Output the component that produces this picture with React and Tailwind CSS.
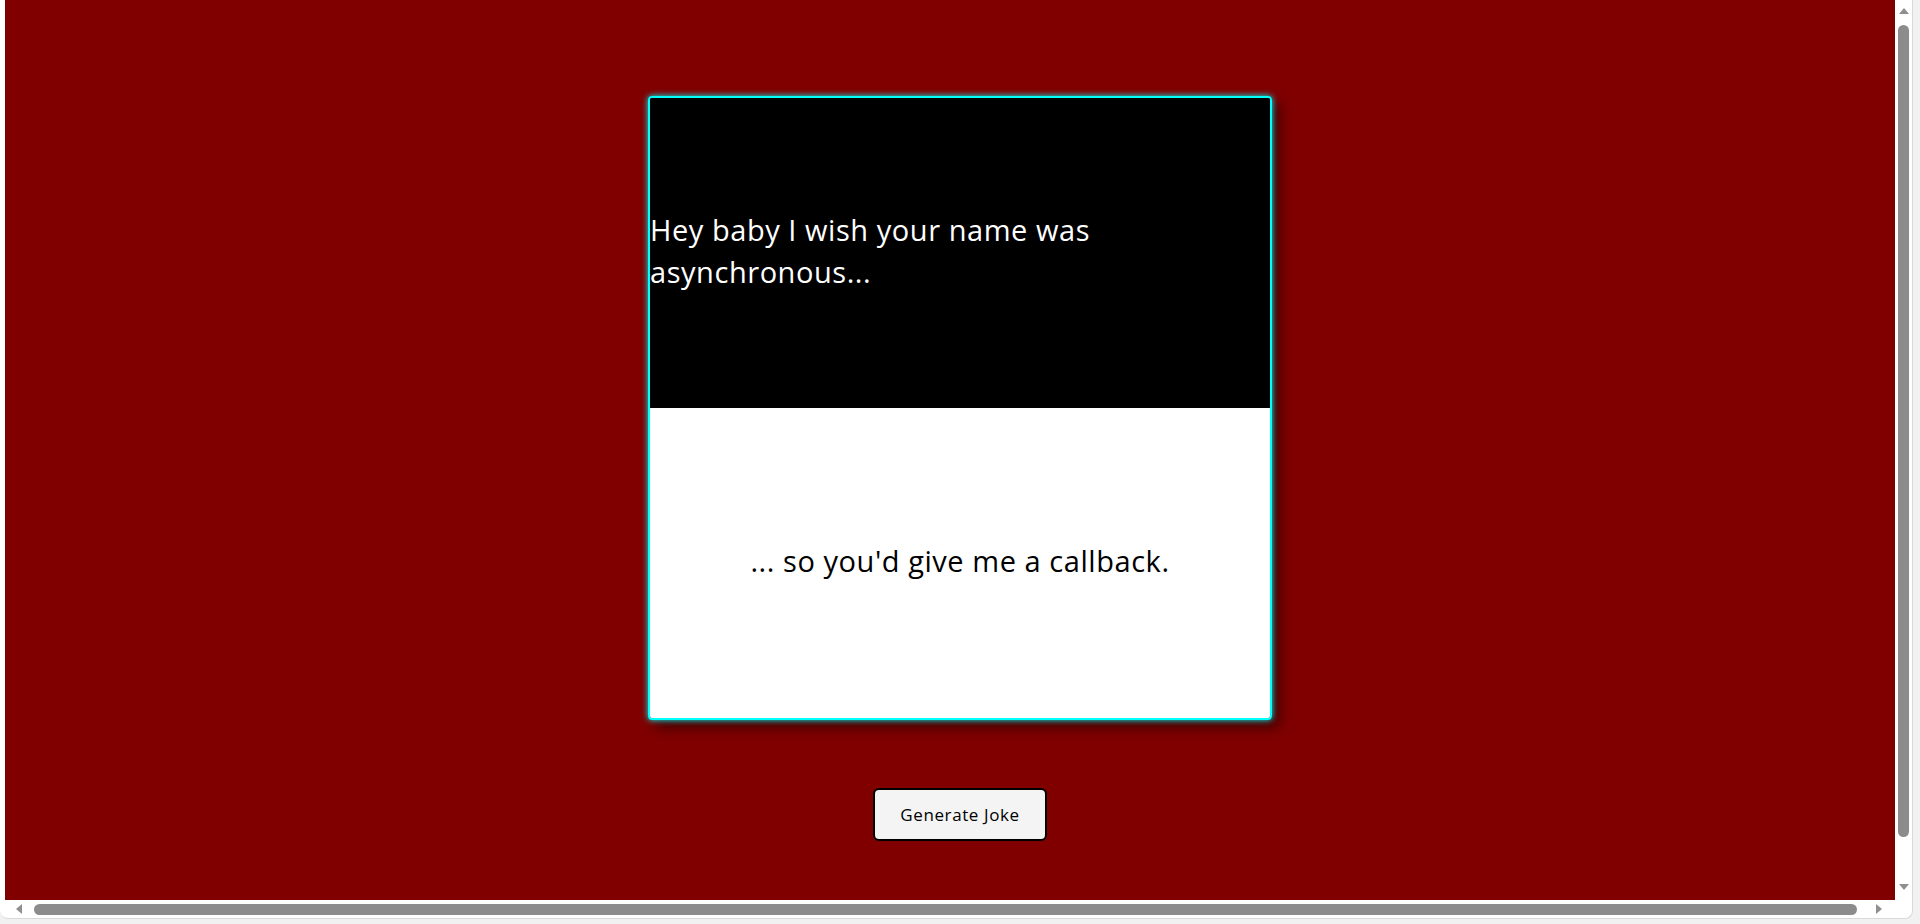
import React, { useState } from 'react';

const jokes = [
  { setup: 'Hey baby I wish your name was asynchronous...', punchline: "... so you'd give me a callback." },
];

const Arrow = ({ dir }) => {
  const points = {
    up: '0,8 5,2 10,8',
    down: '0,2 5,8 10,2',
    left: '8,0 2,5 8,10',
    right: '2,0 8,5 2,10',
  };
  return (
    <svg width="10" height="10" viewBox="0 0 10 10">
      <polygon points={points[dir]} fill="#8f8f8f" />
    </svg>
  );
};

const App = () => {
  const [index, setIndex] = useState(0);
  const joke = jokes[index];

  return (
    <div className="h-[924px] w-full bg-[#f1f1f1] overflow-hidden" style={{ fontFamily: '"Open Sans", "Noto Sans", sans-serif' }}>
      <div className="w-[1913px] h-[919px] bg-white rounded-b-[8px] border-r border-b border-[#d9d9d9] flex flex-col overflow-hidden">
        <div className="flex flex-1 min-h-0">
          <div className="w-[5px] bg-white" />
          <main className="flex-1 bg-[#800000] flex flex-col items-center pt-[96px] pl-[20px]">
            {/* Joke card */}
            <div className="w-[624px] h-[624px] border-2 border-[#00ffff] rounded-[4px] flex flex-col overflow-hidden shadow-[0_0_6px_#00ffff,7px_7px_14px_rgba(0,0,0,0.55)]">
              <div className="flex-1 bg-black text-white flex items-center pb-[5px]">
                <p className="text-[29px] leading-[42px] tracking-[0.55px] pr-4">{joke.setup}</p>
              </div>
              <div className="flex-1 bg-white text-black flex items-center justify-center pb-[5px]">
                <p className="text-[29px] leading-[42px] tracking-[0.55px] text-center">{joke.punchline}</p>
              </div>
            </div>
            <button
              className="mt-[68px] w-[174px] h-[53px] border-2 border-black rounded-[6px] bg-[#f4f4f4] text-[17px] tracking-[0.6px] text-black"
              onClick={() => setIndex((index + 1) % jokes.length)}
            >
              Generate Joke
            </button>
          </main>
          {/* vertical scrollbar */}
          <div className="w-[17px] bg-white flex flex-col items-center pt-[6px] pb-[8px]">
            <Arrow dir="up" />
            <div className="mt-[9px] w-[11px] h-[812px] rounded-full bg-[#8c8c8c]" />
            <div className="flex-1" />
            <Arrow dir="down" />
          </div>
        </div>
        {/* horizontal scrollbar */}
        <div className="h-[18px] flex items-center pl-[14px] pr-[28px]">
          <Arrow dir="left" />
          <div className="ml-[10px] h-[11px] w-[1823px] rounded-full bg-[#8c8c8c]" />
          <div className="flex-1" />
          <Arrow dir="right" />
        </div>
      </div>
    </div>
  );
};

export default App;
